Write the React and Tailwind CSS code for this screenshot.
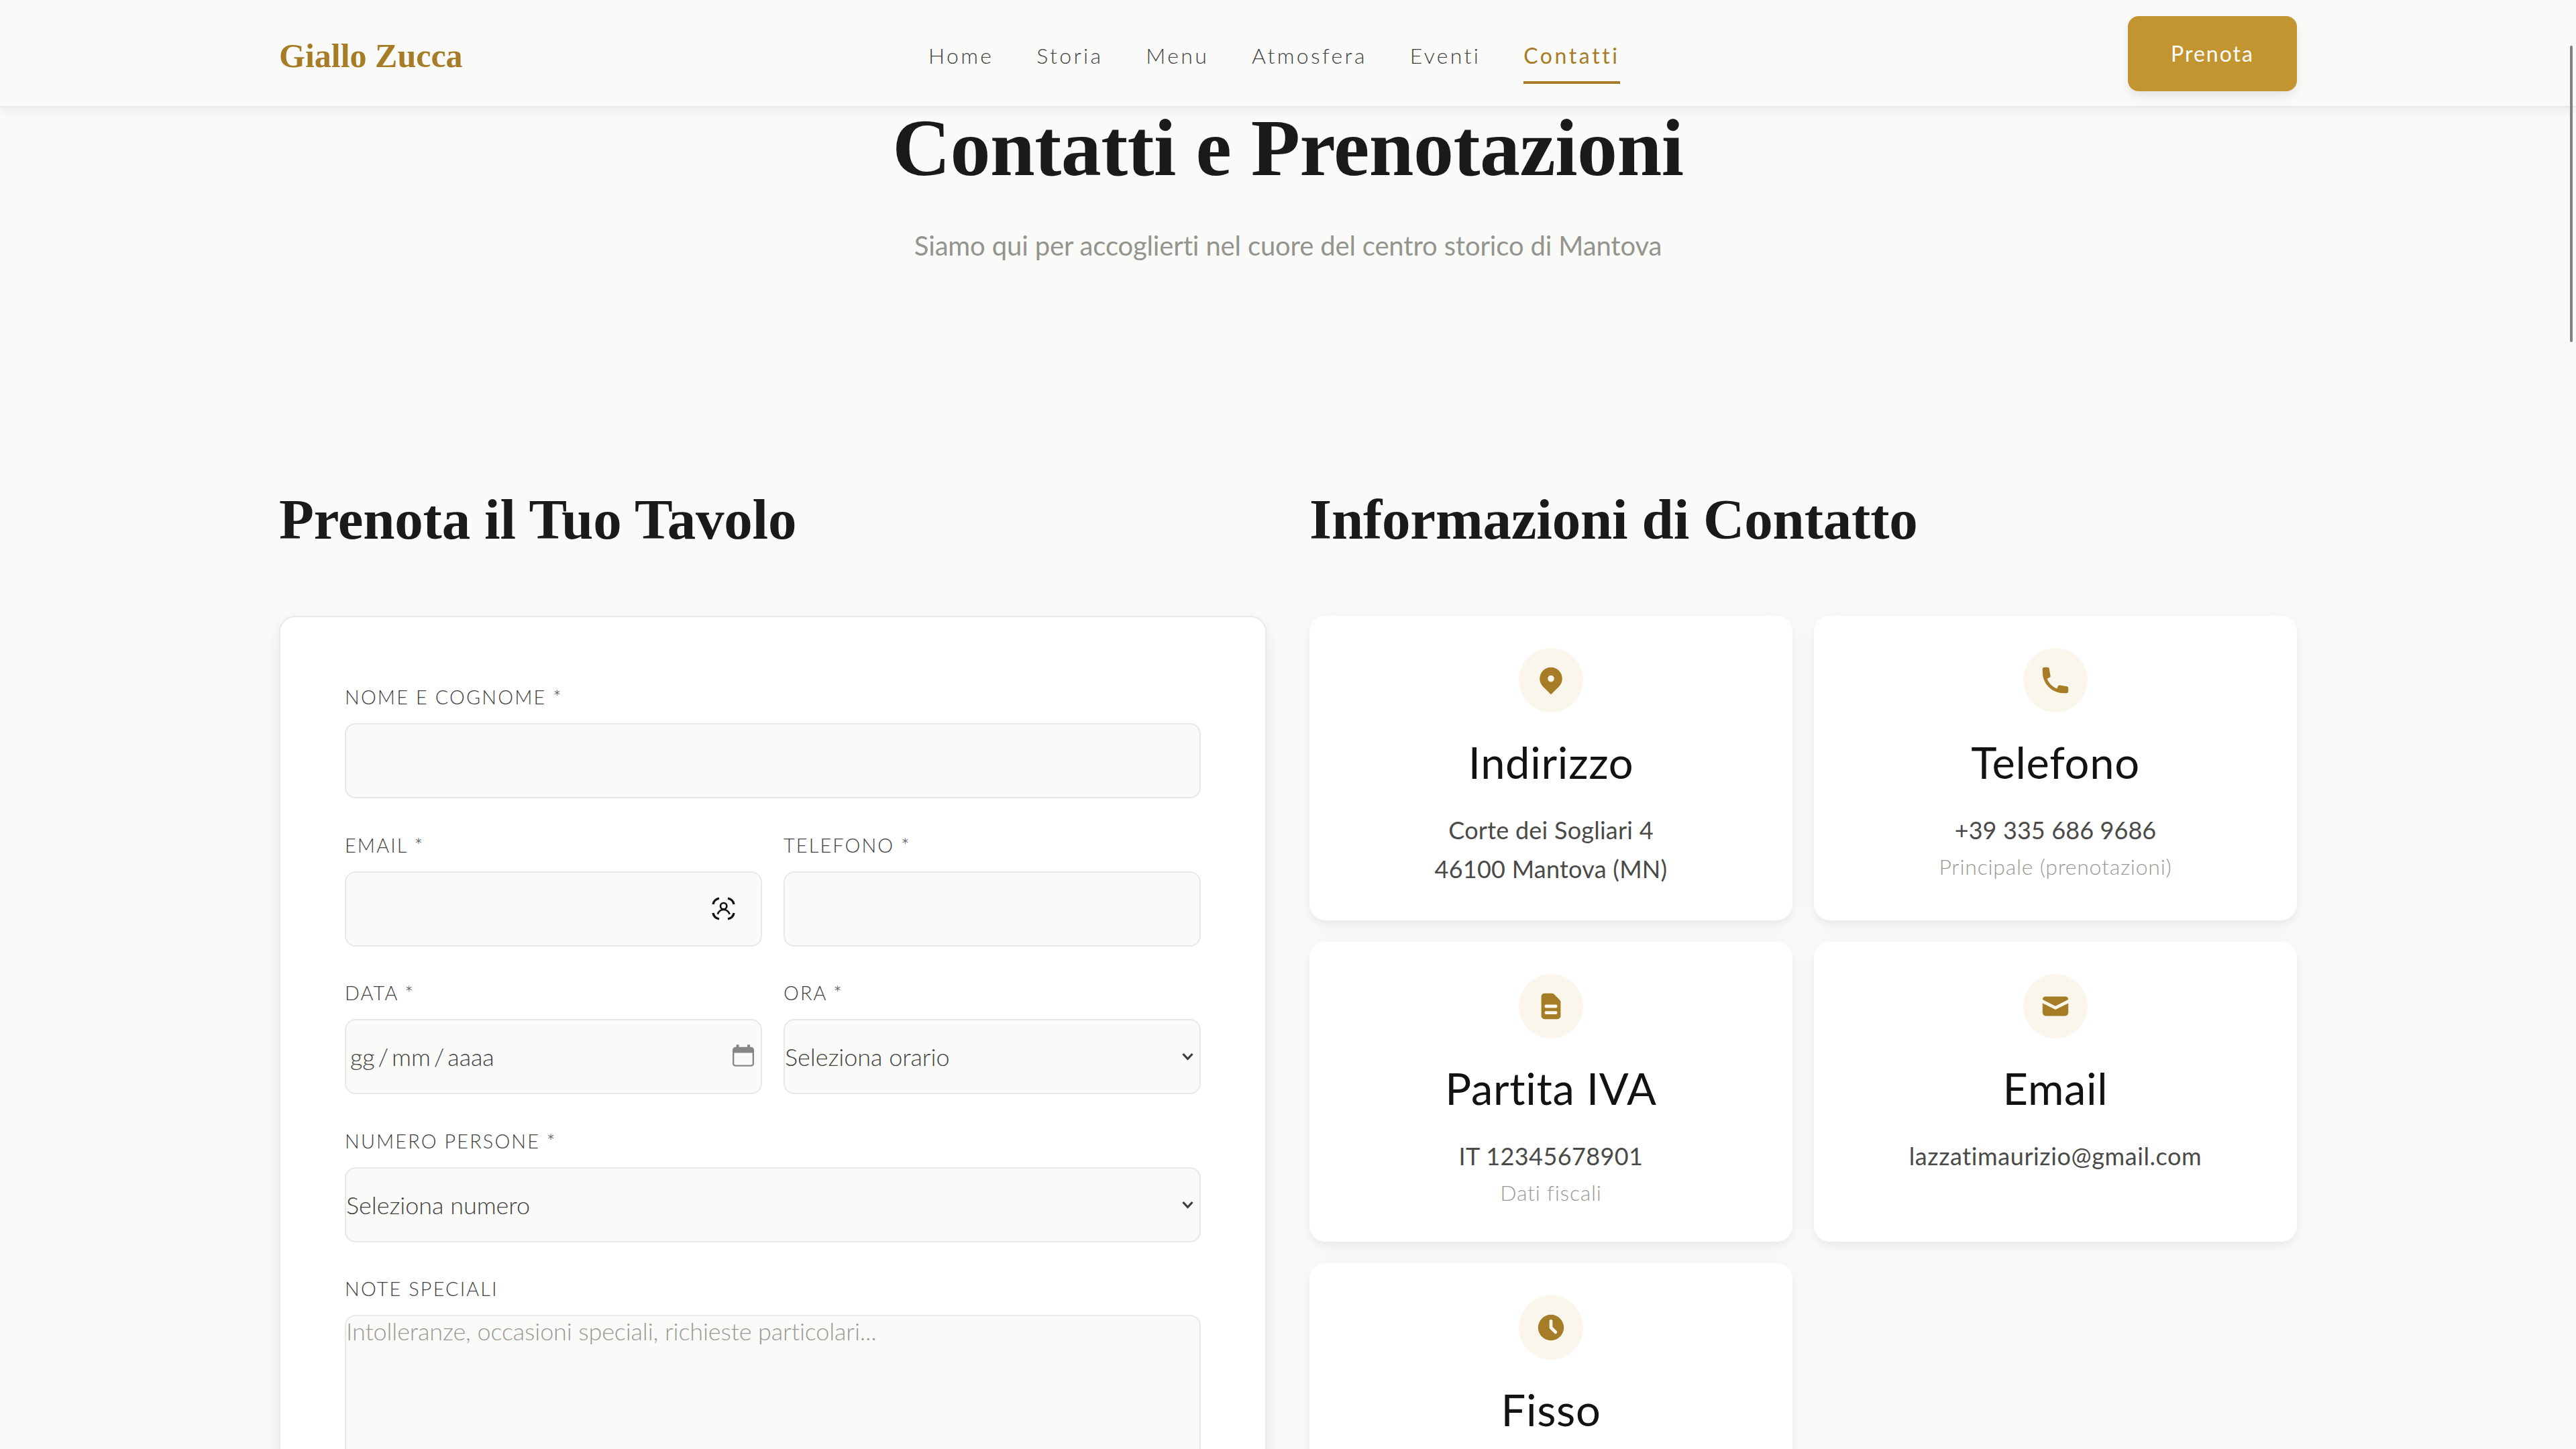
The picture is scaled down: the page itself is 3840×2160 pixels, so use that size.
import { HiLocationMarker, HiPhone, HiDocumentText, HiMail, HiClock } from 'react-icons/hi'

const navLinks = ['Home', 'Storia', 'Menu', 'Atmosfera', 'Eventi', 'Contatti']

const contacts = [
  { icon: HiLocationMarker, title: 'Indirizzo', lines: ['Corte dei Sogliari 4', '46100 Mantova (MN)'], spacing: 'tracking-[0.25px]' },
  { icon: HiPhone, title: 'Telefono', lines: ['+39 335 686 9686'], note: 'Principale (prenotazioni)', spacing: 'tracking-[0.1px]' },
  { icon: HiDocumentText, title: 'Partita IVA', lines: ['IT 12345678901'], note: 'Dati fiscali', spacing: 'tracking-[0.4px]' },
  { icon: HiMail, title: 'Email', lines: ['lazzatimaurizio@gmail.com'], spacing: 'tracking-[0.6px]' },
  { icon: HiClock, title: 'Fisso', lines: [] }
]

const fieldClass =
  'block w-full h-28 rounded-2xl border-2 border-[#e8e8e4] bg-[#fafaf8] text-[36px] font-light text-[#42423f] outline-none'

function Header() {
  return (
    <header className="relative z-10 h-40 border-b-2 border-[#e8e8e4] bg-[#fafaf8] shadow-[0_4px_16px_rgba(0,0,0,0.07)]">
      <div className="flex h-40 items-center px-[416px]">
        <a className="mt-[5px] w-[968px] font-['Liberation_Serif',serif] text-[50px] font-bold leading-none text-[#a67c27]">
          Giallo Zucca
        </a>
        <nav className="mt-[5px] flex gap-16">
          {navLinks.map(link => (
            <a
              key={link}
              className={
                link === 'Contatti'
                  ? 'relative py-4 text-[32px] leading-[52px] tracking-[3.6px] text-[#a67c27]'
                  : 'py-4 text-[32px] font-light leading-[52px] tracking-[3.33px] text-[#42423f]'
              }
            >
              {link}
              {link === 'Contatti' && <span className="absolute inset-x-0 bottom-0 h-1 bg-[#a67c27]" />}
            </a>
          ))}
        </nav>
        <button className="ml-auto h-28 w-[252px] rounded-2xl bg-[#c29530] text-[32px] tracking-[2px] text-white shadow-[0_8px_16px_-2px_rgba(0,0,0,0.1)]">
          Prenota
        </button>
      </div>
    </header>
  )
}

function Field({ label, children }) {
  return (
    <div className="flex-1">
      <label className="mb-[15px] block text-[28.8px] font-light uppercase leading-[47px] tracking-[2.15px] text-[#42423f]">
        {label}
      </label>
      {children}
    </div>
  )
}

function SelectBox({ children }) {
  return (
    <div className={fieldClass}>
      <div className="flex h-full items-center justify-between pr-[9px]">
        <span className="tracking-[-0.05px]">{children}</span>
        <svg className="h-[12px] w-[17px]" viewBox="0 0 17 12" fill="none" stroke="#3c3c3a" strokeWidth="3.2">
          <path d="M1.5 2l7 7.5 7-7.5" />
        </svg>
      </div>
    </div>
  )
}

function ScanUserIcon() {
  return (
    <svg className="h-[35px] w-[35px]" viewBox="0 0 105 105" fill="none" stroke="#111110" strokeWidth="10">
      <path d="M6 33Q9 12 33 6M72 6Q96 12 99 33M99 72Q96 93 72 99M33 99Q9 93 6 72" />
      <circle cx="53" cy="41" r="14" strokeWidth="8" />
      <path d="M26 77Q34 57 53 57T80 77" strokeWidth="8" />
    </svg>
  )
}

function CalendarIcon() {
  return (
    <svg className="h-[33px] w-[32px]" viewBox="0 0 97 99" fill="none">
      <rect x="3.5" y="14.5" width="90" height="81" rx="10" stroke="#868684" strokeWidth="7" />
      <path d="M3 37V22q0-9 9-9h73q9 0 9 9v15zM17 0h12v16H17zM67 0h12v16H67z" fill="#868684" />
    </svg>
  )
}

function BookingForm() {
  return (
    <form className="flex h-[1500px] flex-col gap-[46.5px] rounded-3xl border-2 border-[#e8e8e4] bg-white p-24 shadow-[0_8px_24px_rgba(0,0,0,0.08)]">
      <div className="flex">
        <Field label="Nome e Cognome *">
          <input className={fieldClass} />
        </Field>
      </div>

      <div className="flex gap-8">
        <Field label="Email *">
          <div className={fieldClass}>
            <div className="flex h-full items-center justify-end pr-[38px]">
              <ScanUserIcon />
            </div>
          </div>
        </Field>
        <Field label="Telefono *">
          <input className={fieldClass} />
        </Field>
      </div>

      <div className="flex gap-8">
        <Field label="Data *">
          <div className={fieldClass}>
            <div className="flex h-full items-center justify-between pl-[6px] pr-[10px]">
              <span className="flex gap-[5px] tracking-[-0.1px]">
                <span>gg</span>
                <span>/</span>
                <span>mm</span>
                <span>/</span>
                <span>aaaa</span>
              </span>
              <span className="-mt-1">
                <CalendarIcon />
              </span>
            </div>
          </div>
        </Field>
        <Field label="Ora *">
          <SelectBox>Seleziona orario</SelectBox>
        </Field>
      </div>

      <div className="flex">
        <Field label="Numero Persone *">
          <SelectBox>Seleziona numero</SelectBox>
        </Field>
      </div>

      <div className="flex">
        <Field label="Note Speciali">
          <textarea
            className="block h-64 w-full resize-none rounded-2xl border-2 border-[#e8e8e4] bg-[#fafaf8] text-[36px] font-light leading-[45px] tracking-[-0.13px] outline-none placeholder:text-[#999994]"
            placeholder="Intolleranze, occasioni speciali, richieste particolari..."
          />
        </Field>
      </div>
    </form>
  )
}

function ContactCard({ icon: Icon, title, lines, note, spacing }) {
  return (
    <div className="flex flex-col items-center rounded-3xl bg-white pt-12 text-center shadow-[0_8px_12px_-2px_rgba(0,0,0,0.05),0_4px_40px_rgba(0,0,0,0.04)]">
      <div className="flex h-24 w-24 items-center justify-center rounded-full bg-[#faf6ec]">
        <Icon className="h-12 w-12 text-[#a67c27]" />
      </div>
      <h3 className="mb-[29px] mt-[30px] text-[65px] leading-[88px] tracking-[0.7px] text-[#121210]">{title}</h3>
      {lines.map(line => (
        <p key={line} className={`text-[36px] leading-[57.6px] text-[#4a4a48] ${spacing}`}>
          {line}
        </p>
      ))}
      {note && (
        <p className="text-[32px] font-light leading-[50px] tracking-[0.75px] text-[#999994]">{note}</p>
      )}
    </div>
  )
}

function App() {
  return (
    <div className="relative h-[2160px] w-[3840px] overflow-hidden bg-[#fafaf8] font-['Lato',sans-serif]">
      <Header />

      {/* Hero */}
      <section className="text-center">
        <h1 className="font-['Liberation_Serif',serif] text-[120px] font-bold leading-[121px] tracking-[-0.5px] text-[#1a1a18]">
          Contatti e Prenotazioni
        </h1>
        <p className="mt-[53px] text-[40px] leading-[64px] tracking-[-0.15px] text-[#94948e]">
          Siamo qui per accoglierti nel cuore del centro storico di Mantova
        </p>
      </section>

      {/* Booking and contact info */}
      <section className="mt-[326px] grid grid-cols-2 gap-16 px-[416px]">
        <div>
          <h2 className="mb-[94px] font-['Liberation_Serif',serif] text-[85px] font-bold leading-[100px] tracking-[-0.2px] text-[#1a1a18]">
            Prenota il Tuo Tavolo
          </h2>
          <BookingForm />
        </div>
        <div>
          <h2 className="mb-[94px] font-['Liberation_Serif',serif] text-[85px] font-bold leading-[100px] tracking-[-0.2px] text-[#1a1a18]">
            Informazioni di Contatto
          </h2>
          <div className="grid grid-cols-2 grid-rows-[454px_447px_447px] gap-8">
            {contacts.map(contact => (
              <ContactCard key={contact.title} {...contact} />
            ))}
          </div>
        </div>
      </section>

      {/* Scrollbar thumb */}
      <div className="absolute right-[5px] top-[68px] z-20 h-[442px] w-[4px] rounded-full bg-[#7f8281]" />
    </div>
  )
}

export default App
